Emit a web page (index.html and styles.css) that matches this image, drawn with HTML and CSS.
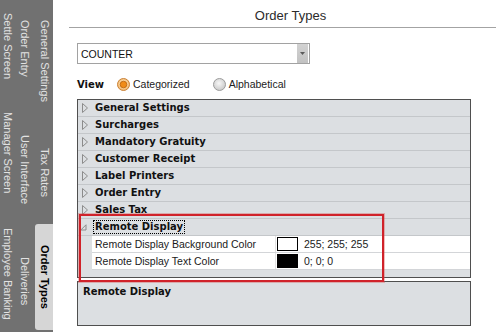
FILE: index.html
```html
<!DOCTYPE html>
<html>
<head>
<meta charset="utf-8">
<title>Order Types</title>
<link rel="stylesheet" href="styles.css">
</head>
<body>
<div class="app">
  <nav class="sidebar">
    <div class="col col1">
      <div class="vlabel c1a">Settle Screen</div>
      <div class="vlabel c1b">Manager Screen</div>
      <div class="vlabel">Employee Banking</div>
    </div>
    <div class="col col2">
      <div class="vlabel c2a">Order Entry</div>
      <div class="vlabel c2b">User Interface</div>
      <div class="vlabel">Deliveries</div>
    </div>
    <div class="col col3">
      <div class="vlabel c3a">General Settings</div>
      <div class="vlabel c3b">Tax Rates</div>
      <div class="vlabel tab-active">Order Types</div>
    </div>
  </nav>

  <main class="main">
    <header class="title">Order Types</header>
    <div class="content">
      <div class="combo">
        <span class="combo-text">COUNTER</span>
        <span class="combo-btn">
          <svg width="5" height="3" viewBox="0 0 5 3"><polygon points="0,0 5,0 2.5,3" fill="#5a5a5a"/></svg>
        </span>
      </div>

      <div class="view-row">
        <span class="view-label">View</span>
        <span class="radio">
          <svg width="13" height="13" viewBox="0 0 13 13">
            <defs>
              <radialGradient id="rsel" cx="50%" cy="45%" r="55%">
                <stop offset="0" stop-color="#fff3da"/>
                <stop offset="1" stop-color="#f2b466"/>
              </radialGradient>
            </defs>
            <circle cx="6.5" cy="6.5" r="6" fill="url(#rsel)" stroke="#c98238"/>
            <circle cx="6.5" cy="6.5" r="3.3" fill="#f08b18" stroke="#b8620c" stroke-width="0.8"/>
          </svg>
          <span>Categorized</span>
        </span>
        <span class="radio radio-off">
          <svg width="13" height="13" viewBox="0 0 13 13">
            <defs>
              <radialGradient id="roff" cx="45%" cy="40%" r="60%">
                <stop offset="0" stop-color="#f7f7f7"/>
                <stop offset="1" stop-color="#c9c9c9"/>
              </radialGradient>
            </defs>
            <circle cx="6.5" cy="6.5" r="6" fill="url(#roff)" stroke="#9c9c9c"/>
          </svg>
          <span>Alphabetical</span>
        </span>
      </div>

      <div class="grid">
        <div class="cat"><span class="exp"><svg width="6" height="10" viewBox="0 0 6 10"><polygon points="0.5,0.5 5.5,5 0.5,9.5" fill="none" stroke="#8c8c8c"/></svg></span><span class="cat-name">General Settings</span></div>
        <div class="cat"><span class="exp"><svg width="6" height="10" viewBox="0 0 6 10"><polygon points="0.5,0.5 5.5,5 0.5,9.5" fill="none" stroke="#8c8c8c"/></svg></span><span class="cat-name">Surcharges</span></div>
        <div class="cat"><span class="exp"><svg width="6" height="10" viewBox="0 0 6 10"><polygon points="0.5,0.5 5.5,5 0.5,9.5" fill="none" stroke="#8c8c8c"/></svg></span><span class="cat-name">Mandatory Gratuity</span></div>
        <div class="cat"><span class="exp"><svg width="6" height="10" viewBox="0 0 6 10"><polygon points="0.5,0.5 5.5,5 0.5,9.5" fill="none" stroke="#8c8c8c"/></svg></span><span class="cat-name">Customer Receipt</span></div>
        <div class="cat"><span class="exp"><svg width="6" height="10" viewBox="0 0 6 10"><polygon points="0.5,0.5 5.5,5 0.5,9.5" fill="none" stroke="#8c8c8c"/></svg></span><span class="cat-name">Label Printers</span></div>
        <div class="cat"><span class="exp"><svg width="6" height="10" viewBox="0 0 6 10"><polygon points="0.5,0.5 5.5,5 0.5,9.5" fill="none" stroke="#8c8c8c"/></svg></span><span class="cat-name">Order Entry</span></div>
        <div class="cat"><span class="exp"><svg width="6" height="10" viewBox="0 0 6 10"><polygon points="0.5,0.5 5.5,5 0.5,9.5" fill="none" stroke="#8c8c8c"/></svg></span><span class="cat-name">Sales Tax</span></div>
        <div class="cat"><span class="exp exp-open"><svg width="7" height="7" viewBox="0 0 7 7"><polygon points="6,0.8 6,6 0.8,6" fill="none" stroke="#8c8c8c"/></svg></span><span class="cat-name focus">Remote Display</span></div>
        <div class="prop">
          <span class="prop-name">Remote Display Background Color</span>
          <span class="prop-val"><span class="swatch swatch-white"></span>255; 255; 255</span>
        </div>
        <div class="prop">
          <span class="prop-name">Remote Display Text Color</span>
          <span class="prop-val"><span class="swatch swatch-black"></span>0; 0; 0</span>
        </div>
      </div>

      <div class="desc">Remote Display</div>
    </div>
  </main>
</div>
<div class="annotation"></div>
</body>
</html>
```

FILE: styles.css
```css
* { box-sizing: border-box; }

html, body {
  margin: 0;
  padding: 0;
  width: 501px;
  height: 332px;
  overflow: hidden;
  background: #ffffff;
  font-family: "Liberation Sans", Arial, sans-serif;
  font-size: 10.5px;
  color: #111;
}

body { position: relative; }

.app {
  display: flex;
  width: 501px;
  height: 332px;
}

/* ---------- Sidebar ---------- */
.sidebar {
  width: 53px;
  height: 332px;
  background: #717171;
  display: flex;
  flex-shrink: 0;
}

.col {
  display: flex;
  flex-direction: column;
}
.col1 { width: 15px; padding-top: 13px; }
.col2 { width: 20px; padding-top: 20px; }
.col3 { width: 18px; padding-top: 20px; }

.vlabel {
  writing-mode: vertical-rl;
  font-family: "Liberation Sans", Arial, sans-serif;
  font-size: 11px;
  color: #e2e2e2;
  white-space: nowrap;
  line-height: 15px;
}
.col2 .vlabel { line-height: 20px; }
.col3 .vlabel { line-height: 17px; }

.c1a { height: 99px; }
.c1b { height: 116px; }
.c2a { height: 115px; }
.c2b { height: 122px; }
.c3a { height: 128px; }
.c3b { height: 76px; }

.tab-active {
  height: 106px;
  width: 18px;
  background: #d6d6d6;
  color: #000;
  font-weight: bold;
  border-radius: 3px 0 0 3px;
  padding-top: 21px;
  line-height: 18px;
}

/* ---------- Main ---------- */
.main {
  flex: 1;
  display: flex;
  flex-direction: column;
}

.title {
  margin: 0 5px 0 16px;
  height: 28px;
  padding: 7px 0 0 16px;
  line-height: 18px;
  text-align: center;
  font-size: 13px;
  color: #2b2b2b;
  border-bottom: 1px solid #a3a3a3;
}

.content {
  padding-left: 24px;
  display: flex;
  flex-direction: column;
}

/* combo */
.combo {
  margin-top: 15px;
  width: 233px;
  height: 21px;
  border: 1px solid #a2a2a2;
  background: #fff;
  display: flex;
  align-items: center;
  padding: 0 1px 0 3px;
}
.combo-text {
  flex: 1;
  color: #111;
  padding-top: 1px;
}
.combo-btn {
  width: 11px;
  height: 19px;
  background: linear-gradient(#d2d2d2, #c2c2c2);
  display: flex;
  align-items: center;
  justify-content: center;
}
.combo-btn svg { display: block; }

/* view row */
.view-row {
  margin-top: 12px;
  height: 16px;
  display: flex;
  align-items: center;
}
.view-label {
  font-family: "DejaVu Sans", Verdana, sans-serif;
  font-weight: bold;
  font-size: 10px;
  width: 40px;
  color: #111;
}
.radio {
  display: flex;
  align-items: center;
  gap: 3px;
  color: #222;
}
.radio svg { display: block; }
.radio-off { margin-left: 23px; }

/* property grid */
.grid {
  margin-top: 7px;
  width: 394px;
  height: 179px;
  border: 1px solid #4f4f4f;
  background: #dcdfe2;
}

.cat {
  height: 17px;
  border-bottom: 1px solid #c4c7ca;
  display: flex;
  align-items: center;
}
.exp {
  width: 17px;
  padding-left: 4px;
  display: flex;
  align-items: center;
}
.exp svg { display: block; }
.exp-open { padding-left: 2px; padding-top: 1px; }

.cat-name {
  font-family: "DejaVu Sans", Verdana, sans-serif;
  font-weight: bold;
  font-size: 10px;
  color: #111;
  line-height: 12px;
}
.focus {
  outline: 1px dotted #000;
  outline-offset: 0;
  padding: 0 1px 0 0;
  margin-left: -1px;
  padding-left: 1px;
}

.prop {
  height: 17px;
  margin-left: 14px;
  background: #fff;
  border-bottom: 1px solid #d3d5d8;
  display: flex;
  align-items: stretch;
}
.prop-name {
  width: 184px;
  padding-left: 3px;
  border-right: 1px solid #e3e3e3;
  display: flex;
  align-items: center;
  color: #1a1a1a;
}
.prop-val {
  flex: 1;
  display: flex;
  align-items: center;
  color: #1a1a1a;
}
.swatch {
  width: 21px;
  height: 14px;
  margin: 0 6px 0 1px;
  border: 1px solid #000;
}
.swatch-white { background: #fff; }
.swatch-black { background: #000; }

/* description */
.desc {
  margin-top: 3px;
  width: 394px;
  height: 45px;
  border: 1px solid #4f4f4f;
  background: #dcdfe2;
  padding: 4px 0 0 5px;
  font-family: "DejaVu Sans", Verdana, sans-serif;
  font-weight: bold;
  font-size: 10px;
  color: #111;
}

/* red annotation overlay */
.annotation {
  position: absolute;
  left: 79px;
  top: 214px;
  width: 305px;
  height: 68px;
  border: 2px solid #d0222a;
  box-shadow: 0 0 0 1px rgba(215, 70, 70, 0.35);
  pointer-events: none;
}
```
